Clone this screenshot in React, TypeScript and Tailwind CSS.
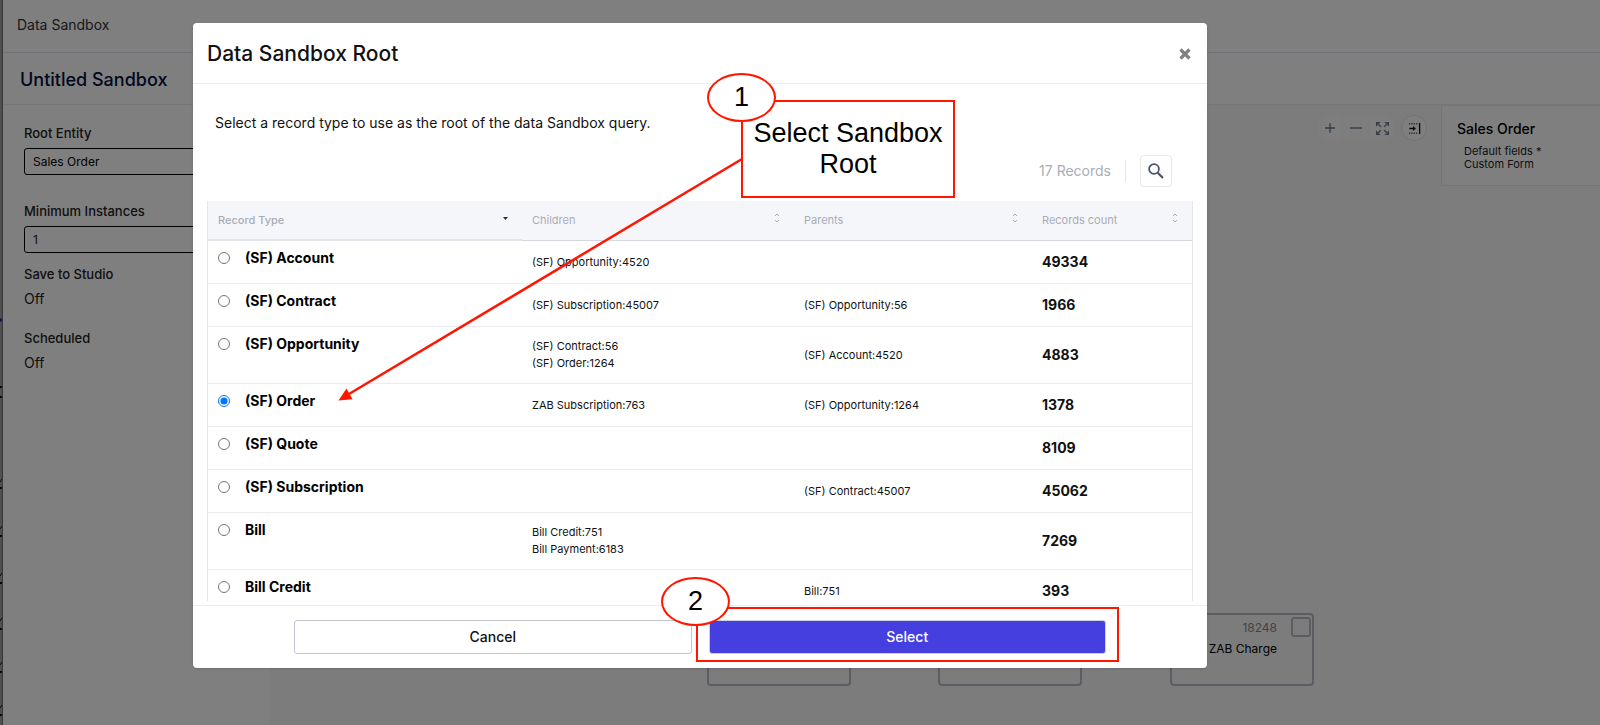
import { useState } from "react";
import { BsArrowsFullscreen } from "react-icons/bs";

type RecordRow = {
  name: string;
  children: string[];
  parents: string[];
  count: number;
};

const records: RecordRow[] = [
  { name: "(SF) Account", children: ["(SF) Opportunity:4520"], parents: [], count: 49334 },
  { name: "(SF) Contract", children: ["(SF) Subscription:45007"], parents: ["(SF) Opportunity:56"], count: 1966 },
  { name: "(SF) Opportunity", children: ["(SF) Contract:56", "(SF) Order:1264"], parents: ["(SF) Account:4520"], count: 4883 },
  { name: "(SF) Order", children: ["ZAB Subscription:763"], parents: ["(SF) Opportunity:1264"], count: 1378 },
  { name: "(SF) Quote", children: [], parents: [], count: 8109 },
  { name: "(SF) Subscription", children: [], parents: ["(SF) Contract:45007"], count: 45062 },
  { name: "Bill", children: ["Bill Credit:751", "Bill Payment:6183"], parents: [], count: 7269 },
  { name: "Bill Credit", children: [], parents: ["Bill:751"], count: 393 },
];

const SortIcon = () => (
  <svg width="6" height="10" viewBox="0 0 6 10" fill="none" stroke="#a9adb8">
    <path d="M1 3 3 1l2 2M1 7l2 2 2-2" />
  </svg>
);

const SearchIcon = () => (
  <svg width="18" height="18" viewBox="0 0 18 18" fill="none" stroke="#4b5468">
    <circle cx="7" cy="7" r="4.9" strokeWidth="1.8" />
    <path d="m10.7 10.7 5.3 5.3" strokeWidth="2.2" />
  </svg>
);

const CollapseIcon = () => (
  <svg width="13" height="13" viewBox="0 0 14 14" fill="none" stroke="#111">
    <path d="M1 2h10M1 12h10" strokeDasharray="1.5 1" />
    <path d="M12.5 1v12" strokeWidth="1.4" />
    <path d="M1.5 7h5" strokeWidth="1.6" />
    <path d="M5.5 4.3 8.5 7l-3 2.7z" fill="#111" stroke="none" />
  </svg>
);

// edge of the page that shows behind the app window
const WindowEdge = () => (
  <div className="w-[3px] shrink-0 border-r border-[#707070] bg-[#a0a0a0]">
    <svg width="2" height="720" fill="none" stroke="#111">
      <path d="M0 387h2M0 397h2M0 488h2M0 536h2M0 583h2M0 629h2M0 672h2M0 715h2" strokeWidth="2" />
      <path d="m0 482 2-3m-2 50 2-3m-2 50 2-3m-2 48 2-3m-2 47 2-3m-2 46 2-3" />
      <path d="M0 320h2" stroke="#2020c0" strokeWidth="3" />
    </svg>
  </div>
);

const Sidebar = () => (
  <aside className="w-[267px] shrink-0 bg-white pt-[18px] pl-[21px] text-[13px] leading-5 text-[#222]">
    <label htmlFor="root-entity" className="block font-medium">
      Root Entity
    </label>
    <input
      id="root-entity"
      defaultValue="Sales Order"
      className="mt-[5px] block h-[27px] w-[220px] rounded-[3px] border border-black px-2 text-xs text-black"
    />
    <label htmlFor="min-instances" className="mt-[26px] block font-medium">
      Minimum Instances
    </label>
    <input
      id="min-instances"
      defaultValue="1"
      className="mt-[5px] block h-[27px] w-[220px] rounded-[3px] border border-black px-2 text-xs"
    />
    <div className="mt-[11px] font-medium">Save to Studio</div>
    <div className="mt-[5px] text-sm">Off</div>
    <div className="mt-[19px] font-medium">Scheduled</div>
    <div className="mt-[5px] text-sm">Off</div>
  </aside>
);

const Canvas = () => (
  <section className="relative flex-1 bg-[#f8f8f8]">
    <div className="flex items-center justify-end gap-[6px] pt-[10px] pr-[14px]">
      <div className="flex gap-px">
        <button aria-label="Zoom in" className="flex h-6 w-[25px] items-center justify-center rounded-l-full bg-[#fcfcfc]">
          <svg width="12" height="12" stroke="#66758c" strokeWidth="1.3">
            <path d="M6 1v10M1 6h10" />
          </svg>
        </button>
        <button aria-label="Zoom out" className="flex h-6 w-[25px] items-center justify-center rounded bg-[#fcfcfc]">
          <svg width="12" height="12" stroke="#66758c" strokeWidth="1.3">
            <path d="M0 6h12" />
          </svg>
        </button>
        <button aria-label="Fit" className="flex h-6 w-[26px] items-center justify-center rounded-r-full bg-[#fcfcfc] text-[#66758c]">
          <BsArrowsFullscreen size={13} strokeWidth={0.8} />
        </button>
      </div>
      <button aria-label="Collapse panel" className="flex size-[26px] items-center justify-center rounded-full border border-[#e6e6e6] bg-white">
        <CollapseIcon />
      </button>
    </div>
    <div className="absolute top-[508px] left-[437px] h-[73px] w-36 rounded border-2 border-[#b9bac4]" />
    <div className="absolute top-[508px] left-[668px] h-[73px] w-36 rounded border-2 border-[#b9bac4]" />
    <div className="absolute top-[508px] left-[900px] flex h-[73px] w-36 justify-end gap-[14px] rounded border-2 border-[#b9bac4] pt-[2px] pr-[1px]">
      <div className="text-right text-xs leading-[21px]">
        <div className="text-[#888]">18248</div>
        <label htmlFor="zab-charge" className="block">
          ZAB Charge
        </label>
      </div>
      <input
        id="zab-charge"
        type="checkbox"
        className="size-5 appearance-none rounded-[3px] border-2 border-[#b9bac4]"
      />
    </div>
  </section>
);

const DetailsPanel = () => (
  <aside className="w-[159px] shrink-0 bg-[#fafafa]">
    <div className="h-[81px] border border-r-0 border-[#ebebeb] bg-white pt-[13px] pl-[15px]">
      <h3 className="text-sm leading-5 font-medium">Sales Order</h3>
      <div className="pt-[6px] pl-[7px] text-[11px] leading-[13px] text-[#222]">
        <div>Default fields *</div>
        <div>Custom Form</div>
      </div>
    </div>
  </aside>
);

const RecordTable = () => {
  const [selected, setSelected] = useState("(SF) Order");

  return (
    <div className="max-h-[400px] overflow-hidden">
      <table className="w-full table-fixed border-separate border-spacing-0 border-x border-[#e5e7eb] text-left">
        <colgroup>
          <col className="w-[314px]" />
          <col className="w-[272px]" />
          <col className="w-[238px]" />
          <col />
        </colgroup>
        <thead className="bg-[#f5f6fa] text-[11px] text-[#a9adb8]">
          <tr>
            <th className="h-10 border-b-2 border-[#e0e3e8] px-[10px] font-medium">
              <div className="flex items-center justify-between">
                Record Type
                <svg width="6" height="10" className="mr-[3px] mb-[5px]">
                  <path d="M0 4h5L2.500 7z" fill="#1e2c52" />
                </svg>
              </div>
            </th>
            {["Children", "Parents", "Records count"].map((title) => (
              <th key={title} className="h-10 border-b border-[#d5d8de] px-[10px] font-normal">
                <div className="flex items-center justify-between">
                  {title}
                  <span className="mr-1 mb-[5px]">
                    <SortIcon />
                  </span>
                </div>
              </th>
            ))}
          </tr>
        </thead>
        <tbody className="text-[#111]">
          {records.map((row) => (
            <tr key={row.name} className={row.children.length > 1 ? "h-[57px]" : "h-[43px]"}>
              <td className="border-b border-[#ebedf0] px-[10px] pt-[7px] align-top">
                <label className="flex items-center gap-[15px] text-sm leading-5 font-bold text-black">
                  <input
                    type="radio"
                    name="record-type"
                    checked={selected === row.name}
                    onChange={() => setSelected(row.name)}
                    className="size-3"
                  />
                  {row.name}
                </label>
              </td>
              <td className="border-b border-[#ebedf0] px-[10px] text-[11px] leading-[17px]">
                {row.children.map((item) => (
                  <div key={item}>{item}</div>
                ))}
              </td>
              <td className="border-b border-[#ebedf0] px-[10px] text-[11px] leading-[17px]">
                {row.parents.map((item) => (
                  <div key={item}>{item}</div>
                ))}
              </td>
              <td className="border-b border-[#ebedf0] px-[10px] text-sm font-bold">{row.count}</td>
            </tr>
          ))}
        </tbody>
      </table>
    </div>
  );
};

const Annotations = () => (
  <div className="pointer-events-none absolute inset-0 font-['Liberation_Sans',sans-serif] text-black">
    <svg className="absolute inset-0 h-full w-full" fill="none" stroke="#ff1500" strokeWidth="2.5">
      <path d="M549 136 156 371" />
      <path d="M145.5 377.5 153.5 365.5l6 10.800z" fill="#ff1500" stroke="none" />
    </svg>
    <div className="absolute top-[77px] left-[548px] flex h-[98px] w-[214px] items-center justify-center border-2 border-[#ff1500] bg-white text-center text-[27px] leading-[31px]">
      Select Sandbox
      <br />
      Root
    </div>
    <div className="absolute top-[50px] left-[514px] flex h-[49px] w-[69px] items-center justify-center rounded-[50%] border-2 border-[#ff1500] bg-white text-[27px]">
      1
    </div>
    <div className="absolute top-[584px] left-[503px] h-[55px] w-[423px] border-2 border-[#ff1500]" />
    <div className="absolute top-[554px] left-[468px] flex h-[49px] w-[69px] items-center justify-center rounded-[50%] border-2 border-[#ff1500] bg-white text-[27px]">
      2
    </div>
  </div>
);

const RootDialog = () => (
  <div
    role="dialog"
    aria-labelledby="dialog-title"
    className="relative mt-[23px] ml-[193px] w-full max-w-[1014px] rounded bg-white shadow"
  >
    <header className="flex h-[61px] items-center justify-between border-b border-[#ebedf0] pt-[2px] pr-4 pl-[14px]">
      <h2 id="dialog-title" className="text-[21px] font-medium text-[#111]">
        Data Sandbox Root
      </h2>
      <button aria-label="Close">
        <svg width="12" height="12" stroke="#808080" strokeWidth="3.2">
          <path d="m1.5 1.5 9 9m0-9-9 9" />
        </svg>
      </button>
    </header>
    <div className="px-[14px] pt-[29px] pb-1">
      <p className="pl-2 text-sm text-[#111]">Select a record type to use as the root of the data Sandbox query.</p>
      <div className="mt-[22px] mb-[14px] flex items-center justify-end pr-[21px]">
        <span className="text-sm text-[#a9adb8]">17 Records</span>
        <span className="mx-[14px] h-[22px] w-px bg-[#e2e4e9]" />
        <button aria-label="Search" className="flex size-8 items-center justify-center rounded border border-[#e6e8ec]">
          <SearchIcon />
        </button>
      </div>
      <RecordTable />
    </div>
    <footer className="flex gap-[17px] border-t border-[#ebedf0] px-[101px] pt-[14px] pb-[14px] text-sm font-medium">
      <button className="h-[34px] flex-1 rounded-[3px] border border-[#c4c6d0] text-[#111]">Cancel</button>
      <button className="h-[34px] flex-1 rounded-[3px] border border-[#cfcfe6] bg-[#463fe0] text-white">Select</button>
    </footer>
    <Annotations />
  </div>
);

export default function App() {
  return (
    <div className="relative flex min-h-screen bg-white font-['Inter',sans-serif]">
      <WindowEdge />
      <div className="flex min-w-0 flex-1 flex-col">
        <header className="flex h-[53px] items-center border-b border-[#e4e4f4] pb-[3px] pl-[14px] text-sm text-[#333]">
          Data Sandbox
        </header>
        <div className="flex h-[52px] items-center border-b border-[#ededf2] pt-[2px] pl-[17px]">
          <h1 className="text-lg font-medium text-[#001040]">Untitled Sandbox</h1>
        </div>
        <main className="flex flex-1">
          <Sidebar />
          <Canvas />
          <DetailsPanel />
        </main>
      </div>
      <div className="absolute inset-0 flex items-start bg-black/50">
        <RootDialog />
      </div>
    </div>
  );
}
